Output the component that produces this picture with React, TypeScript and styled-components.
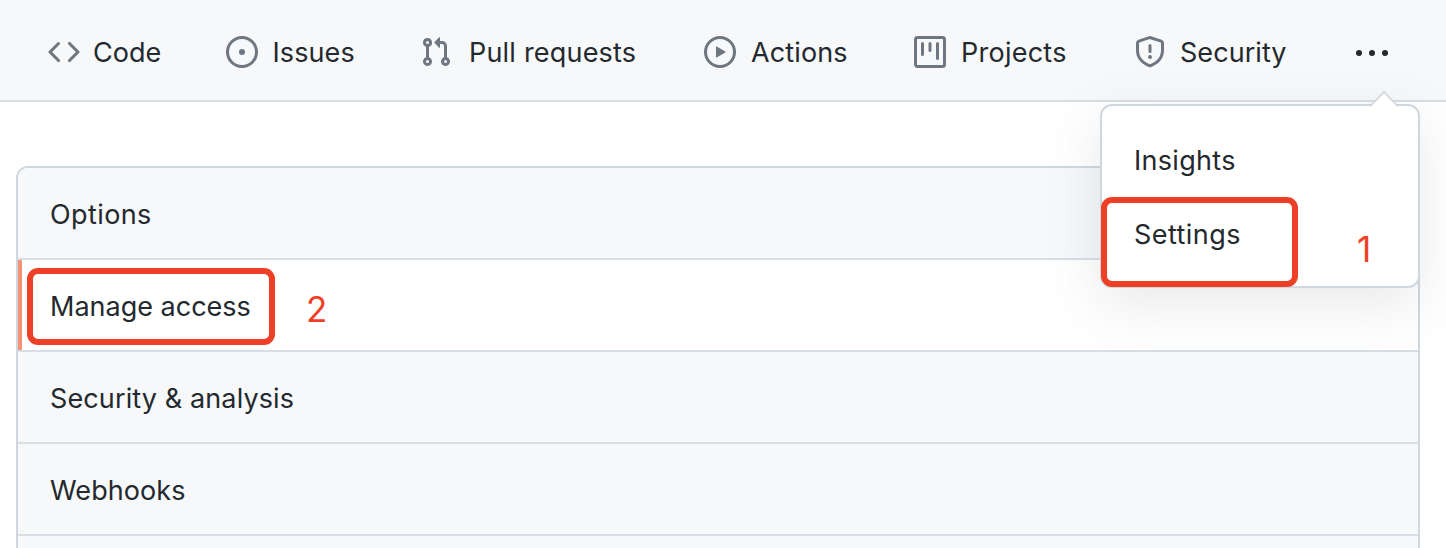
import React from "react";
import styled, { createGlobalStyle } from "styled-components";

const GlobalStyle = createGlobalStyle`
  * { box-sizing: border-box; }
  html, body { margin: 0; background: #fff; }
  body {
    height: 548px;
    overflow: hidden;
    color: #24292e;
    font-family: Inter, "Liberation Sans", sans-serif;
    font-size: 27px;
    line-height: 42px;
  }
`;

const Page = styled.div`
  position: relative;
  height: 548px;
  overflow: hidden;
`;

const Header = styled.nav`
  display: flex;
  align-items: flex-start;
  height: 102px;
  padding: 30px 0 0 48px;
  background: #f6f8fa;
  border-bottom: 2px solid #d8dee4;
`;

const Tab = styled.a<{ $width: number; $gap: number }>`
  display: flex;
  flex: none;
  align-items: center;
  gap: ${(p) => p.$gap}px;
  width: ${(p) => p.$width}px;
  height: 44px;
`;

const Icon = styled.svg`
  flex: none;
  width: 32px;
  height: 32px;
  fill: #6e7781;
`;

const Label = styled.span<{ $spacing?: number }>`
  white-space: nowrap;
  letter-spacing: ${(p) => p.$spacing ?? 0}px;
`;

const TabLabel = styled(Label)`
  padding-top: 2px;
`;

const MoreButton = styled.a`
  display: flex;
  padding-top: 8px;
  ${Icon} { fill: #24292e; }
`;

const List = styled.aside`
  margin: 64px 26px 0 16px;
  border: 2px solid #d1d7de;
  border-radius: 12px 12px 0 0;
  overflow: hidden;
`;

const Row = styled.a<{ $selected?: boolean }>`
  display: flex;
  align-items: center;
  height: 92px;
  padding: 3px 0 0 32px;
  border-bottom: 2px solid #d8dee4;
  background: ${(p) => (p.$selected ? "#fff" : "#f6f8fa")};
  box-shadow: ${(p) => (p.$selected ? "inset 4px 0 #f19279" : "none")};
`;

const Menu = styled.div`
  position: absolute;
  top: 104px;
  left: 1100px;
  width: 320px;
  height: 184px;
  padding: 18px 0 0 32px;
  background: #fff;
  border: 2px solid #d1d7de;
  border-radius: 12px;
  box-shadow: 0 16px 54px rgba(100, 106, 112, 0.15);
`;

const MenuItem = styled.a`
  display: flex;
  align-items: center;
  height: 74px;
`;

const Caret = styled.svg`
  position: absolute;
  top: -16px;
  left: 266px;
  width: 32px;
  height: 18px;
`;

const Outline = styled.div<{ $x: number; $y: number; $w: number; $h: number }>`
  position: absolute;
  left: ${(p) => p.$x}px;
  top: ${(p) => p.$y}px;
  width: ${(p) => p.$w}px;
  height: ${(p) => p.$h}px;
  border: 6px solid #ee4026;
  border-radius: 11px;
`;

const Step = styled.span<{ $x: number; $y: number }>`
  position: absolute;
  left: ${(p) => p.$x}px;
  top: ${(p) => p.$y}px;
  color: #ee4026;
  font-size: 35px;
  line-height: 42px;
`;

const tabs = [
  {
    name: "Code", width: 178, gap: 13, spacing: 0,
    path: "M4.72 3.22a.75.75 0 011.06 1.06L2.06 8l3.72 3.72a.75.75 0 11-1.06 1.06L.47 8.53a.75.75 0 010-1.06l4.25-4.25zm6.56 0a.75.75 0 10-1.06 1.06L13.94 8l-3.72 3.72a.75.75 0 101.06 1.06l4.25-4.25a.75.75 0 000-1.06l-4.25-4.25z",
  },
  {
    name: "Issues", width: 194, gap: 14.5, spacing: 0.1,
    path: "M8 9.5a1.5 1.5 0 100-3 1.5 1.5 0 000 3zM8 0a8 8 0 100 16A8 8 0 008 0zM1.5 8a6.5 6.5 0 1113 0 6.5 6.5 0 01-13 0z",
  },
  {
    name: "Pull requests", width: 284, gap: 17, spacing: 0.2,
    path: "M7.177 3.073L9.573.677A.25.25 0 0110 .854v4.792a.25.25 0 01-.427.177L7.177 3.427a.25.25 0 010-.354zM3.75 2.5a.75.75 0 100 1.5.75.75 0 000-1.5zm-2.25.75a2.25 2.25 0 113 2.122v5.256a2.251 2.251 0 11-1.5 0V5.372A2.25 2.25 0 011.5 3.25zM11 2.5h-1V4h1a1 1 0 011 1v5.628a2.251 2.251 0 101.5 0V5A2.5 2.5 0 0011 2.5zm1 10.25a.75.75 0 111.5 0 .75.75 0 01-1.5 0zM3.75 12a.75.75 0 100 1.5.75.75 0 000-1.5z",
  },
  {
    name: "Actions", width: 210, gap: 15, spacing: 0.12,
    path: "M1.5 8a6.5 6.5 0 1113 0 6.5 6.5 0 01-13 0zM8 0a8 8 0 100 16A8 8 0 008 0zM6.379 5.227A.25.25 0 006 5.442v5.117a.25.25 0 00.379.214l4.264-2.559a.25.25 0 000-.428L6.379 5.227z",
  },
  {
    name: "Projects", width: 220, gap: 15, spacing: 0.25,
    path: "M1.75 0A1.75 1.75 0 000 1.75v12.5C0 15.216.784 16 1.75 16h12.5A1.75 1.75 0 0016 14.25V1.75A1.75 1.75 0 0014.25 0H1.75zM1.5 1.75a.25.25 0 01.25-.25h12.5a.25.25 0 01.25.25v12.5a.25.25 0 01-.25.25H1.75a.25.25 0 01-.25-.25V1.75zM11.75 3a.75.75 0 00-.75.75v7.5a.75.75 0 001.5 0v-7.5a.75.75 0 00-.75-.75zm-8.25.75a.75.75 0 011.5 0v5.5a.75.75 0 01-1.5 0v-5.5zM8 3a.75.75 0 00-.75.75v3.5a.75.75 0 001.5 0v-3.5A.75.75 0 008 3z",
  },
  {
    name: "Security", width: 222, gap: 14, spacing: 0.05,
    path: "M7.467.133a1.75 1.75 0 011.066 0l5.25 1.68A1.75 1.75 0 0115 3.48V7c0 1.566-.32 3.182-1.303 4.682-.983 1.498-2.585 2.813-5.032 3.855a1.7 1.7 0 01-1.33 0c-2.447-1.042-4.049-2.357-5.032-3.855C1.32 10.182 1 8.566 1 7V3.48a1.75 1.75 0 011.217-1.667l5.25-1.68zm.61 1.429a.25.25 0 00-.153 0l-5.25 1.68a.25.25 0 00-.174.238V7c0 1.358.275 2.666 1.057 3.86.784 1.194 2.121 2.34 4.366 3.297a.2.2 0 00.154 0c2.245-.956 3.582-2.104 4.366-3.298C13.225 9.666 13.5 8.36 13.5 7V3.48a.25.25 0 00-.174-.237l-5.25-1.68zM9 10.5a1 1 0 11-2 0 1 1 0 012 0zm-.25-5.75a.75.75 0 10-1.5 0v3a.75.75 0 001.5 0v-3z",
  },
];

const rows = [
  { name: "Options", spacing: 0.4 },
  { name: "Manage access", spacing: 0, selected: true },
  { name: "Security & analysis", spacing: 0.12 },
  { name: "Webhooks", spacing: 0.08 },
  { name: "", spacing: 0 },
];

const menuItems = [
  { name: "Insights", spacing: 0.3 },
  { name: "Settings", spacing: 0.45 },
];

export default function App() {
  return (
    <Page>
      <GlobalStyle />
      <Header>
        {tabs.map((t) => (
          <Tab key={t.name} $width={t.width} $gap={t.gap}>
            <Icon viewBox="0 0 16 16">
              <path fillRule="evenodd" d={t.path} />
            </Icon>
            <TabLabel $spacing={t.spacing}>{t.name}</TabLabel>
          </Tab>
        ))}
        <MoreButton>
          <Icon viewBox="0 0 16 16">
            <circle cx="1.5" cy="7.5" r="1.5" />
            <circle cx="8" cy="7.5" r="1.5" />
            <circle cx="14.5" cy="7.5" r="1.5" />
          </Icon>
        </MoreButton>
      </Header>
      <List>
        {rows.map((r) => (
          <Row key={r.name} $selected={r.selected}>
            <Label $spacing={r.spacing}>{r.name}</Label>
          </Row>
        ))}
      </List>
      <Menu>
        <Caret viewBox="0 0 32 18">
          <path d="M2 17.5L16 2.5L30 17.5V18H2z" fill="#fff" />
          <path d="M2 16.5L16 2L30 16.5" fill="none" stroke="#d1d7de" strokeWidth="1.6" />
        </Caret>
        {menuItems.map((m) => (
          <MenuItem key={m.name}>
            <Label $spacing={m.spacing}>{m.name}</Label>
          </MenuItem>
        ))}
      </Menu>
      <Outline $x={1101} $y={197} $w={197} $h={90} />
      <Step $x={1357} $y={228}>1</Step>
      <Outline $x={27} $y={268} $w={248} $h={77} />
      <Step $x={306} $y={288}>2</Step>
    </Page>
  );
}
